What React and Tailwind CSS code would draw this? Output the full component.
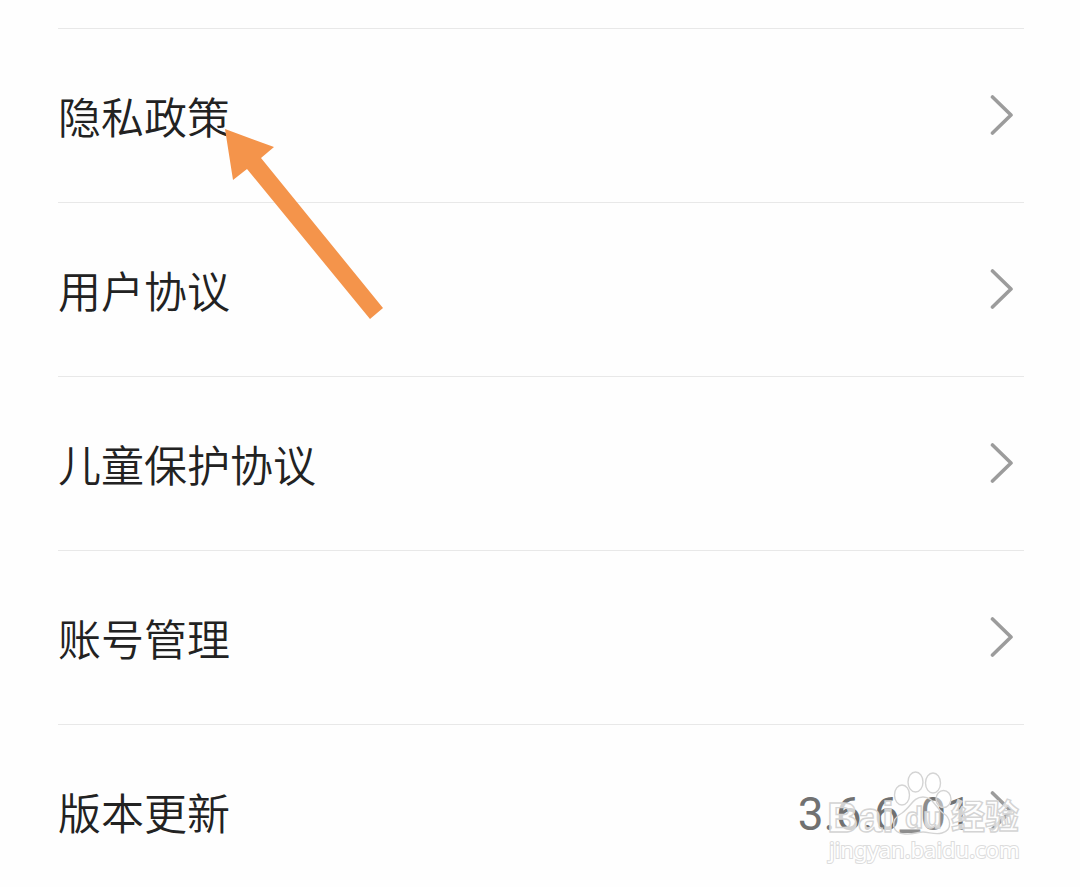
import React from 'react';

const items = [
    { label: '隐私政策' },
    { label: '用户协议' },
    { label: '儿童保护协议' },
    { label: '账号管理' },
    { label: '版本更新', value: '3.6.6_01' },
];

const Chevron = () => (
    <svg viewBox="0 0 24 40" className="w-6 h-10 shrink-0" fill="none" stroke="#9c9c9c" strokeWidth="3.6" strokeLinecap="round" strokeLinejoin="round" aria-hidden="true">
        <path d="M2.5 2 L21 20 L2.5 38" />
    </svg>
);

const SettingsRow = ({ label, value }) => (
    <li className="border-t border-[#e8e8e8]">
        <button type="button" className="w-full h-[173px] flex items-center justify-between pr-[10px] pb-[2px] text-left">
            <span className="text-[43px] leading-[60px] font-[350] text-[#222222]">{label}</span>
            <span className="flex items-center gap-[18px]">
                {value && (
                    <span className="pt-[6px] font-['Roboto',sans-serif] text-[46px] leading-[60px] text-[#717171]">{value}</span>
                )}
                <Chevron />
            </span>
        </button>
    </li>
);

// Orange pointer towards the privacy policy row
const Pointer = () => (
    <svg viewBox="0 0 160 194" className="absolute left-[224px] top-[127px] w-[160px] h-[194px] pointer-events-none" aria-hidden="true">
        <path d="M1 2 L50 20 L37 31 L159 181 L146 192 L23 42 L9 53 Z" fill="#f4944b" />
    </svg>
);

const Watermark = () => (
    <svg viewBox="0 0 200 100" className="absolute left-[826px] top-[768px] w-[200px] h-[100px] pointer-events-none" aria-hidden="true">
        <g fill="#ffffff" fillOpacity="0.5" stroke="#d4d4d4" strokeWidth="1.4">
            <ellipse cx="76" cy="27" rx="7.5" ry="10" />
            <ellipse cx="89.5" cy="14" rx="7.5" ry="10" />
            <ellipse cx="107" cy="15" rx="7.5" ry="10" />
            <ellipse cx="117.5" cy="31" rx="7.5" ry="8.5" />
            <path fillOpacity="0.2" d="M97 29 C87 29 85 39 76 45 C63 52 66 66 79 66 C87 67 91 64 97 64 C103 64 109 67 116 65 C127 62 125 50 117 45 C109 39 107 29 97 29 Z" />
        </g>
        <g fill="#ffffff" fillOpacity="0.7" stroke="#d4d4d4" strokeWidth="1.4">
            <text x="1" y="64" fontSize="43" className="font-['Liberation_Sans',sans-serif] font-bold">Bai</text>
            <text x="79" y="60" fontSize="30" className="font-['Liberation_Sans',sans-serif] font-bold">du</text>
            <text x="125" y="61" fontSize="34" className="font-['Noto_Sans_CJK_SC',sans-serif] font-bold">经验</text>
        </g>
        <text x="3" y="90" fontSize="22" fill="#ffffff" stroke="#dcdcdc" strokeWidth="2" paintOrder="stroke" className="font-['Noto_Sans',sans-serif]">jingyan.baidu.com</text>
    </svg>
);

const App = () => {
    return (
        <main className="relative min-h-screen bg-[#fefefe] pt-7 pl-[58px] pr-14 font-['Noto_Sans_CJK_SC',sans-serif] overflow-hidden">
            <ul>
                {items.map((item) => (
                    <SettingsRow key={item.label} {...item} />
                ))}
            </ul>
            <Pointer />
            <Watermark />
        </main>
    );
};

export default App;
